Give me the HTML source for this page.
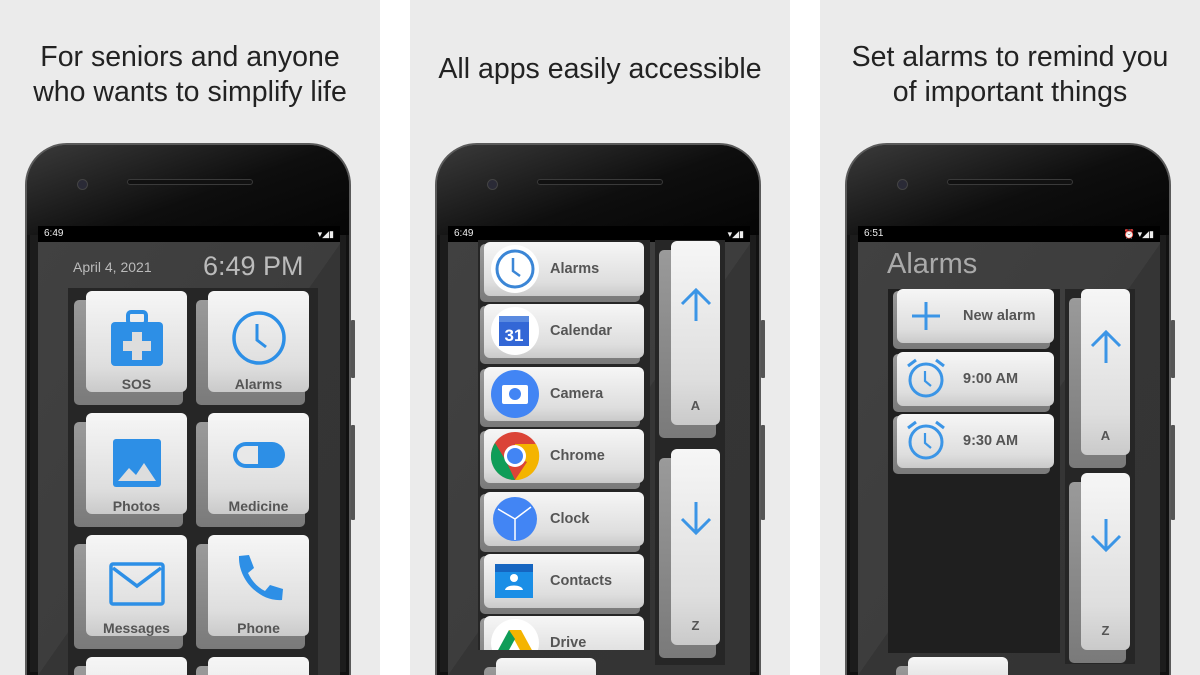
<!DOCTYPE html>
<html><head><meta charset="utf-8"><style>
*{margin:0;padding:0;box-sizing:border-box}
html{width:1200px;height:675px;overflow:hidden}
body{width:1200px;height:675px;background:#fff;position:relative;overflow:hidden;font-family:"Liberation Sans",Arial,sans-serif}
.panel{position:absolute;top:0;width:380px;height:675px;background:#ebebeb;overflow:hidden}
.h{position:absolute;left:0;width:380px;text-align:center;font-size:28.5px;color:#222;line-height:35px}
.phone{position:absolute;left:25px;top:143px;width:326px;height:532px;border-radius:42px 42px 0 0;background:#1c1c1c;border:2px solid #5a5a5a;border-bottom:0;box-shadow:inset 0 0 0 3px #111}
.phone .gl{position:absolute;left:0;top:0;right:0;height:90px;border-radius:40px 40px 0 0;background:linear-gradient(160deg,#3a3a3a 0%,#0e0e0e 55%,#050505 100%)}
.cam{position:absolute;left:50px;top:34px;width:11px;height:11px;border-radius:50%;background:#2a2a36;border:1px solid #444}
.spk{position:absolute;left:100px;top:34px;width:126px;height:6px;border-radius:3px;background:#111;border:1px solid #3a3a3a}
.btn{position:absolute;right:-6px;width:4px;background:#555;border-radius:1px}
.sb{position:absolute;left:11px;top:81px;width:302px;height:16px;background:#000;color:#eee;font-size:10px;line-height:16px;padding-left:6px}
.sb i{position:absolute;right:6px;top:0;font-style:normal;font-size:9px}
.scr{position:absolute;left:11px;top:97px;width:302px;height:435px;background:linear-gradient(125deg,#414141 0%,#3d3d3d 50%,#353535 50%,#343434 100%)}
.k{position:absolute}
.k .s{position:absolute;left:0;background:linear-gradient(#9a9a9a,#7a7a7a);border-radius:5px}
.k .f{position:absolute;right:0;top:0;border-radius:6px;background:linear-gradient(#f6f6f6,#dedede 75%,#cacaca);display:flex;flex-direction:column;align-items:center;justify-content:flex-end;color:#555;font-weight:bold;font-size:14px}
.well{position:absolute;background:#262626}
.row .f{flex-direction:row;justify-content:flex-start}
.row .f span{position:absolute;left:66px;top:50%;transform:translateY(-50%);font-size:14.5px}
#p1{position:absolute;left:0;top:0;width:1200px;height:675px;overflow:hidden}
</style></head><body>

<div class="panel" style="left:0">
<div class="h" style="top:40px">For seniors and anyone<br>who wants to simplify life</div>
<div class="phone"><div class="gl"></div><div class="cam"></div><div class="spk"></div>
<div class="btn" style="top:175px;height:58px"></div><div class="btn" style="top:280px;height:95px"></div>
<div class="sb">6:49<i>▾◢▮</i></div><div class="scr"></div></div>
<div style="position:absolute;left:73px;top:259px;color:#bbb;font-size:14px">April 4, 2021</div>
<div style="position:absolute;left:203px;top:251px;color:#bbb;font-size:27px">6:49 PM</div>
<div class="well" style="left:68px;top:288px;width:250px;height:387px"></div>
</div>

<div class="panel" style="left:410px">
<div class="h" style="top:52px">All apps easily accessible</div>
<div class="phone"><div class="gl"></div><div class="cam"></div><div class="spk"></div>
<div class="btn" style="top:175px;height:58px"></div><div class="btn" style="top:280px;height:95px"></div>
<div class="sb">6:49<i>▾◢▮</i></div><div class="scr"></div></div>
<div class="well" style="left:68px;top:240px;width:172px;height:410px"></div>
<div class="well" style="left:245px;top:240px;width:70px;height:425px"></div>
</div>

<div class="panel" style="left:820px">
<div class="h" style="top:40px">Set alarms to remind you<br>of important things</div>
<div class="phone"><div class="gl"></div><div class="cam"></div><div class="spk"></div>
<div class="btn" style="top:175px;height:58px"></div><div class="btn" style="top:280px;height:95px"></div>
<div class="sb">6:51<i>⏰ ▾◢▮</i></div><div class="scr"></div></div>
<div style="position:absolute;left:67px;top:248px;color:#aaa;font-size:29px">Alarms</div>
<div class="well" style="left:68px;top:289px;width:172px;height:364px;background:#1f1f1f"></div>
<div class="well" style="left:245px;top:289px;width:70px;height:375px"></div>
</div>

<div id="p1"></div>
<script>
function key(x,y,w,h,off,label,icon,cls){
 const H=Math.min(h+off+2,675-y);
 return `<div class="k ${cls||''}" style="left:${x-off}px;top:${y}px;width:${w+off}px;height:${H}px;overflow:hidden">
 <div class="s" style="top:${Math.max(off-3,2)}px;width:${w+off-4}px;height:${h+4}px"></div>
 <div class="f" style="width:${w}px;height:${h}px">${icon||''}${label}</div></div>`;
}
const B='#2d8fe6';
const I={
sos:`<svg width="56" height="58" viewBox="0 0 56 58" style="margin-bottom:8px"><rect x="19" y="2" width="18" height="12" rx="3" fill="none" stroke="${B}" stroke-width="4"/><rect x="2" y="12" width="52" height="44" rx="4" fill="${B}"/><path d="M23 22h10v9h9v10h-9v9H23v-9h-9V31h9z" fill="#ddd"/></svg>`,
alarm:`<svg width="56" height="56" viewBox="0 0 56 56" style="margin-bottom:10px"><circle cx="28" cy="28" r="25" fill="none" stroke="${B}" stroke-width="3.5"/><path d="M26 14v16l9 7" fill="none" stroke="${B}" stroke-width="3"/></svg>`,
photo:`<svg width="50" height="50" viewBox="0 0 50 50" style="margin-bottom:10px"><rect x="1" y="1" width="48" height="48" rx="3" fill="${B}"/><path d="M6 43l11-13 7 7 8-12 12 18z" fill="#ddd"/></svg>`,
med:`<svg width="56" height="30" viewBox="0 0 56 30" style="margin-bottom:28px"><rect x="2" y="2" width="52" height="26" rx="13" fill="${B}"/><path d="M27 6H15a9 9 0 0 0 0 18h12z" fill="#e8e8e8"/></svg>`,
msg:`<svg width="56" height="44" viewBox="0 0 56 44" style="margin-bottom:14px"><rect x="2" y="2" width="52" height="40" rx="2" fill="none" stroke="${B}" stroke-width="3.5"/><path d="M4 6l24 18 24-18" fill="none" stroke="${B}" stroke-width="3.5"/></svg>`,
phone:`<svg width="52" height="52" viewBox="0 0 52 52" style="margin-bottom:14px"><path d="M6 2l10-1 5 13-6 5c4 8 9 14 17 18l5-6 13 4-1 11c-22 2-44-20-43-44z" fill="${B}"/></svg>`
};
let h='';
const rows=[291,413,535,657];
const cols=[86,208];
const d1=[['SOS','sos','Alarms','alarm'],['Photos','photo','Medicine','med'],['Messages','msg','Phone','phone'],['','','','']];
rows.forEach((y,r)=>{cols.forEach((x,c)=>{h+=key(x,y,101,101,12,d1[r][c*2],I[d1[r][c*2+1]]||'','')})});
const li=[['Alarms',`<svg width="50" height="50" viewBox="0 0 50 50"><circle cx="25" cy="25" r="24" fill="#fff"/><circle cx="25" cy="25" r="18" fill="none" stroke="#3b86d6" stroke-width="3"/><path d="M23 14v13l7 5" fill="none" stroke="#3b86d6" stroke-width="2.5"/></svg>`],
['Calendar',`<svg width="50" height="50" viewBox="0 0 50 50"><circle cx="25" cy="25" r="24" fill="#fff"/><rect x="9" y="10" width="30" height="30" fill="#3367d6"/><rect x="9" y="10" width="30" height="6" fill="#5a8ae0"/><text x="24" y="35" fill="#fff" font-size="17" text-anchor="middle" font-family="Liberation Sans">31</text></svg>`],
['Camera',`<svg width="50" height="50" viewBox="0 0 50 50"><circle cx="25" cy="25" r="24" fill="#4285f4"/><rect x="12" y="16" width="26" height="19" rx="2" fill="#fff"/><circle cx="25" cy="25" r="6" fill="#4285f4"/></svg>`],
['Chrome',`<svg width="50" height="50" viewBox="0 0 50 50"><circle cx="25" cy="25" r="24" fill="#db4437"/><path d="M25 25L37 31 25 49A24 24 0 0 0 46 13L25 13z" fill="#f4b400"/><path d="M4 37A24 24 0 0 1 5 12L16 30 25 49A24 24 0 0 1 4 37z" fill="#0f9d58"/><circle cx="25" cy="25" r="11" fill="#fff"/><circle cx="25" cy="25" r="8" fill="#4285f4"/></svg>`],
['Clock',`<svg width="50" height="50" viewBox="0 0 50 50"><circle cx="25" cy="25" r="22" fill="#4285f4"/><path d="M25 25V46M25 25L8 15M25 25l16-12" stroke="#fff" stroke-width="1.5" fill="none"/></svg>`],
['Contacts',`<svg width="50" height="50" viewBox="0 0 50 50"><rect x="5" y="8" width="38" height="34" fill="#1a8ee6"/><rect x="5" y="8" width="38" height="8" fill="#1565c0"/><circle cx="24" cy="22" r="4" fill="#fff"/><path d="M15 34c1-6 17-6 18 0z" fill="#fff"/></svg>`],
['Drive',`<svg width="50" height="50" viewBox="0 0 50 50"><circle cx="25" cy="25" r="24" fill="#fff"/><path d="M19 12h12l12 22H31z" fill="#f4b400"/><path d="M19 12L7 34l6 9 12-22z" fill="#0f9d58"/><path d="M13 43h24l6-9H19z" fill="#4285f4"/></svg>`]];
const ly=[242,304,367,429,492,554,616];
li.forEach((a,i)=>{h+=`<div style="position:absolute;left:0;top:0;width:1200px;height:${i==6?650:675}px;overflow:hidden;pointer-events:none">`+key(484,ly[i],160,54,4,`<span>${a[0]}</span>`,`<div style="position:absolute;left:6px;top:2px">${a[1]}</div>`,'row')+'</div>'});
h+=key(496,658,100,40,12,'','','');
const up=`<svg width="36" height="36" viewBox="0 0 36 36"><path d="M18 34V3M4 17L18 3l14 14" fill="none" stroke="#3b95e6" stroke-width="3"/></svg>`;
const dn=`<svg width="36" height="36" viewBox="0 0 36 36"><path d="M18 2v31M4 19l14 14 14-14" fill="none" stroke="#3b95e6" stroke-width="3"/></svg>`;
function sk(x,y,hh,arrow,letter){return key(x,y,49,hh,12,`<div style="position:absolute;top:${hh*0.35-18}px">${arrow}</div><div style="margin-bottom:12px;font-size:13px">${letter}</div>`,'','')}
h+=sk(671,241,184,up,'A');h+=sk(671,449,196,dn,'Z');
const al=`<svg width="42" height="40" viewBox="0 0 42 40"><circle cx="21" cy="22" r="16" fill="none" stroke="#3b95e6" stroke-width="3"/><path d="M20 13v10l6 5" fill="none" stroke="#3b95e6" stroke-width="2.2"/><path d="M3 8l8-6M39 8l-8-6" stroke="#3b95e6" stroke-width="3"/></svg>`;
const pl=`<svg width="30" height="30" viewBox="0 0 30 30"><path d="M15 1v28M1 15h28" stroke="#3b95e6" stroke-width="3"/></svg>`;
[[289,'New alarm',pl],[352,'9:00 AM',al],[414,'9:30 AM',al]].forEach(a=>{h+=key(897,a[0],157,54,4,`<span>${a[1]}</span>`,`<div style="position:absolute;left:${a[2]==pl?14:8}px;top:${a[2]==pl?12:6}px">${a[2]}</div>`,'row')});
h+=sk(1081,289,166,up,'A');h+=sk(1081,473,177,dn,'Z');
h+=key(908,657,100,40,12,'','','');
document.getElementById('p1').innerHTML=h;
</script>
</body></html>
